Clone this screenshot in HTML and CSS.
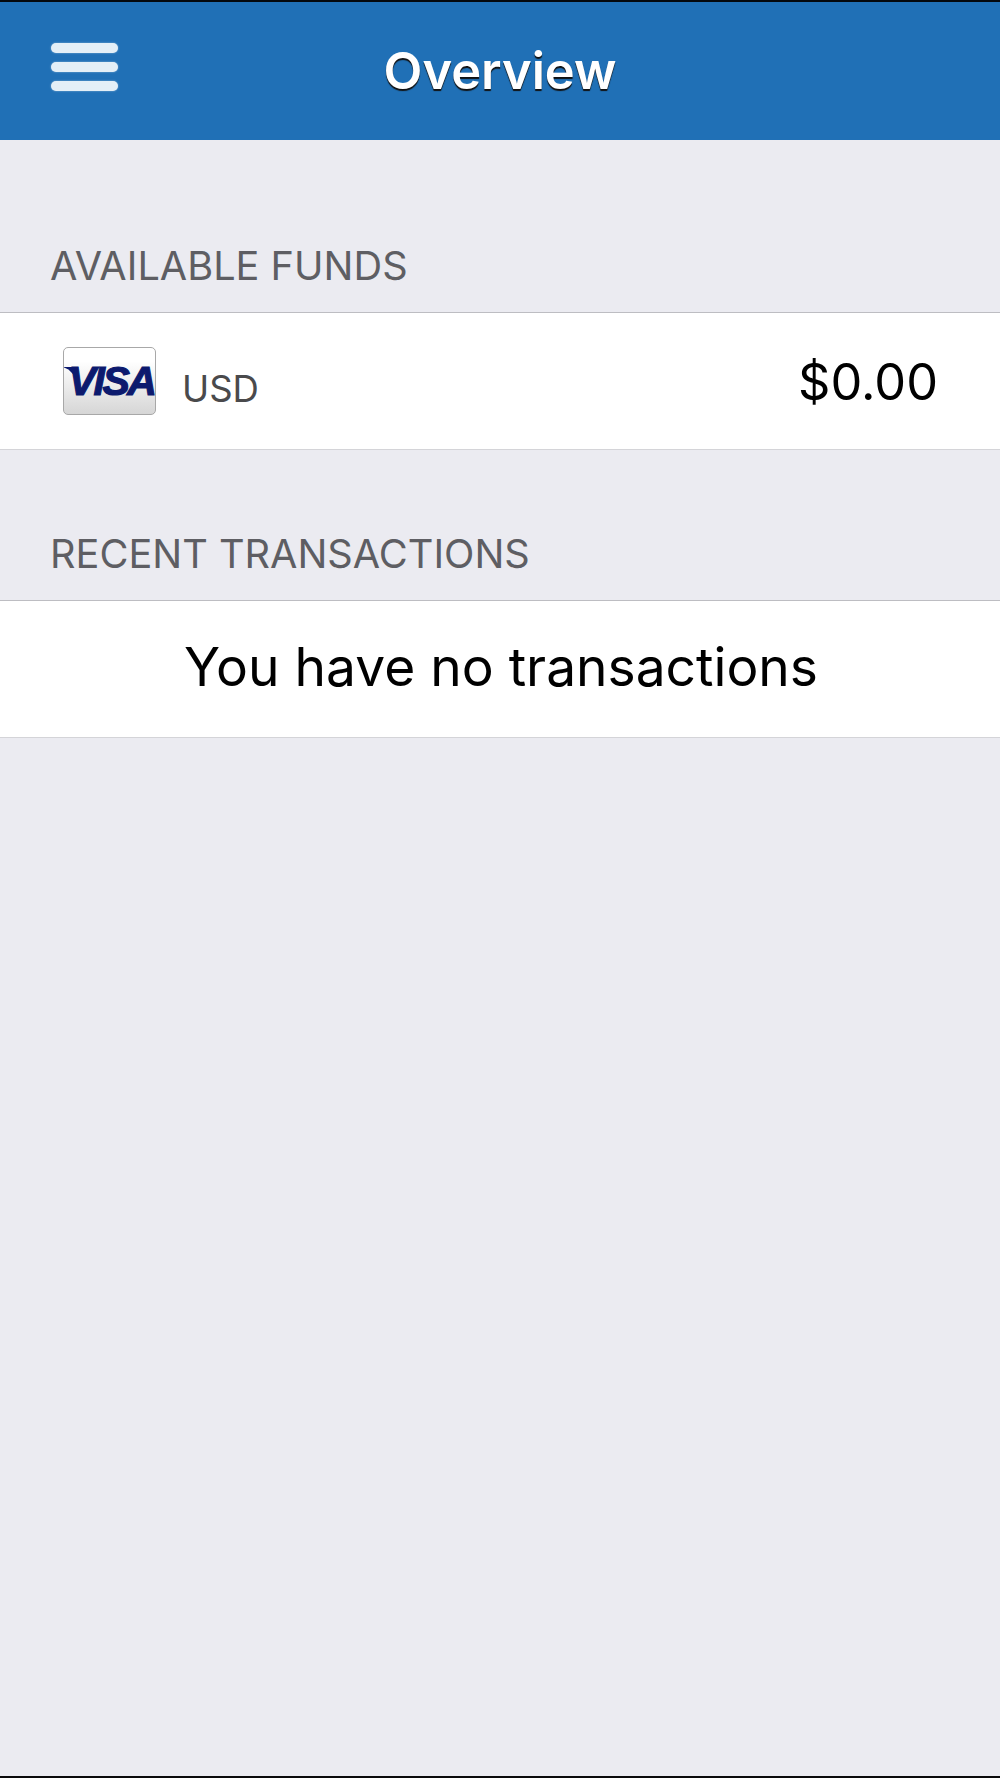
FILE: index.html
```html
<!DOCTYPE html>
<html lang="en">
<head>
<meta charset="utf-8">
<title>Overview</title>
<link rel="stylesheet" href="styles.css">
</head>
<body>
<div class="screen">
  <header class="topbar">
    <button class="menu" aria-label="Menu"><span></span><span></span><span></span></button>
    <h1 class="title">Overview</h1>
  </header>
  <main class="content">
    <h2 class="section-label first">AVAILABLE FUNDS</h2>
    <section class="row funds">
      <div class="card-badge"><span class="visa">VISA</span></div>
      <span class="currency">USD</span>
      <span class="amount">$0.00</span>
    </section>
    <h2 class="section-label">RECENT TRANSACTIONS</h2>
    <section class="row empty">You have no transactions</section>
  </main>
</div>
</body>
</html>
```
FILE: styles.css
```css
* { box-sizing: border-box; }
html, body { margin: 0; padding: 0; }
body { background: #ebebf1; font-family: Inter, "Liberation Sans", sans-serif; }

.screen {
  width: 1000px;
  height: 1778px;
  display: flex;
  flex-direction: column;
  border-top: 2px solid #04080d;
  border-bottom: 2px solid #0a0a0c;
  overflow: hidden;
}

.topbar {
  height: 138px;
  flex: none;
  background: #2070b6;
  display: flex;
  align-items: center;
  justify-content: center;
  position: relative;
}
.menu {
  position: absolute;
  left: 51px;
  top: 41px;
  width: 67px;
  padding: 0;
  border: 0;
  background: none;
  display: flex;
  flex-direction: column;
  gap: 9px;
}
.menu span {
  height: 10px;
  border-radius: 5px;
  background: #e4eff7;
  box-shadow: 0 0 2px rgba(255, 255, 255, .5);
}
.title {
  margin: 0;
  font-size: 50.6px;
  font-weight: 600;
  color: #fff;
  text-shadow: 0 2px 1px #111;
  position: relative;
  top: -1px;
}

.section-label {
  margin: 82px 0 0;
  padding: 0 0 0 50px;
  height: 68px;
  font-size: 39.7px;
  font-weight: 400;
  line-height: 44px;
  color: #5e5e63;
}
.section-label.first { margin-top: 104px; }

.row {
  height: 138px;
  background: #fff;
  border-top: 1px solid #bdbdc2;
  border-bottom: 1px solid #d4d4d8;
  display: flex;
  align-items: center;
}

.funds { padding: 0 63px; }
.card-badge {
  width: 93px;
  height: 68px;
  flex: none;
  border: 1px solid #a8a8a8;
  border-radius: 5px;
  background: linear-gradient(#ffffff 20%, #d6d6d6);
  display: flex;
  align-items: center;
  justify-content: center;
  overflow: hidden;
}
/* Wordmark with the small swoosh off the top of the V */
.visa {
  position: relative;
  padding-left: 4px;
  font-family: "Liberation Sans", Arial, sans-serif;
  font-size: 41px;
  font-weight: 700;
  font-style: italic;
  letter-spacing: -2.4px;
  line-height: 1;
  color: #0c1a6e;
  -webkit-text-stroke: 1.2px #0c1a6e;
}
.visa::before {
  content: "";
  position: absolute;
  left: -3px;
  top: 6px;
  width: 14px;
  height: 10px;
  background: #0c1a6e;
  clip-path: polygon(0 0, 100% 0, 100% 100%, 50% 30%);
}
.currency {
  margin-left: 26px;
  margin-top: 16px;
  font-size: 36.5px;
  color: #4a4a4c;
}
.amount {
  margin-left: auto;
  margin-right: -1px;
  font-size: 50.5px;
  color: #000;
}

.empty {
  justify-content: center;
  padding-bottom: 5px;
  padding-left: 2px;
  font-size: 53.3px;
  color: #000;
}
```
